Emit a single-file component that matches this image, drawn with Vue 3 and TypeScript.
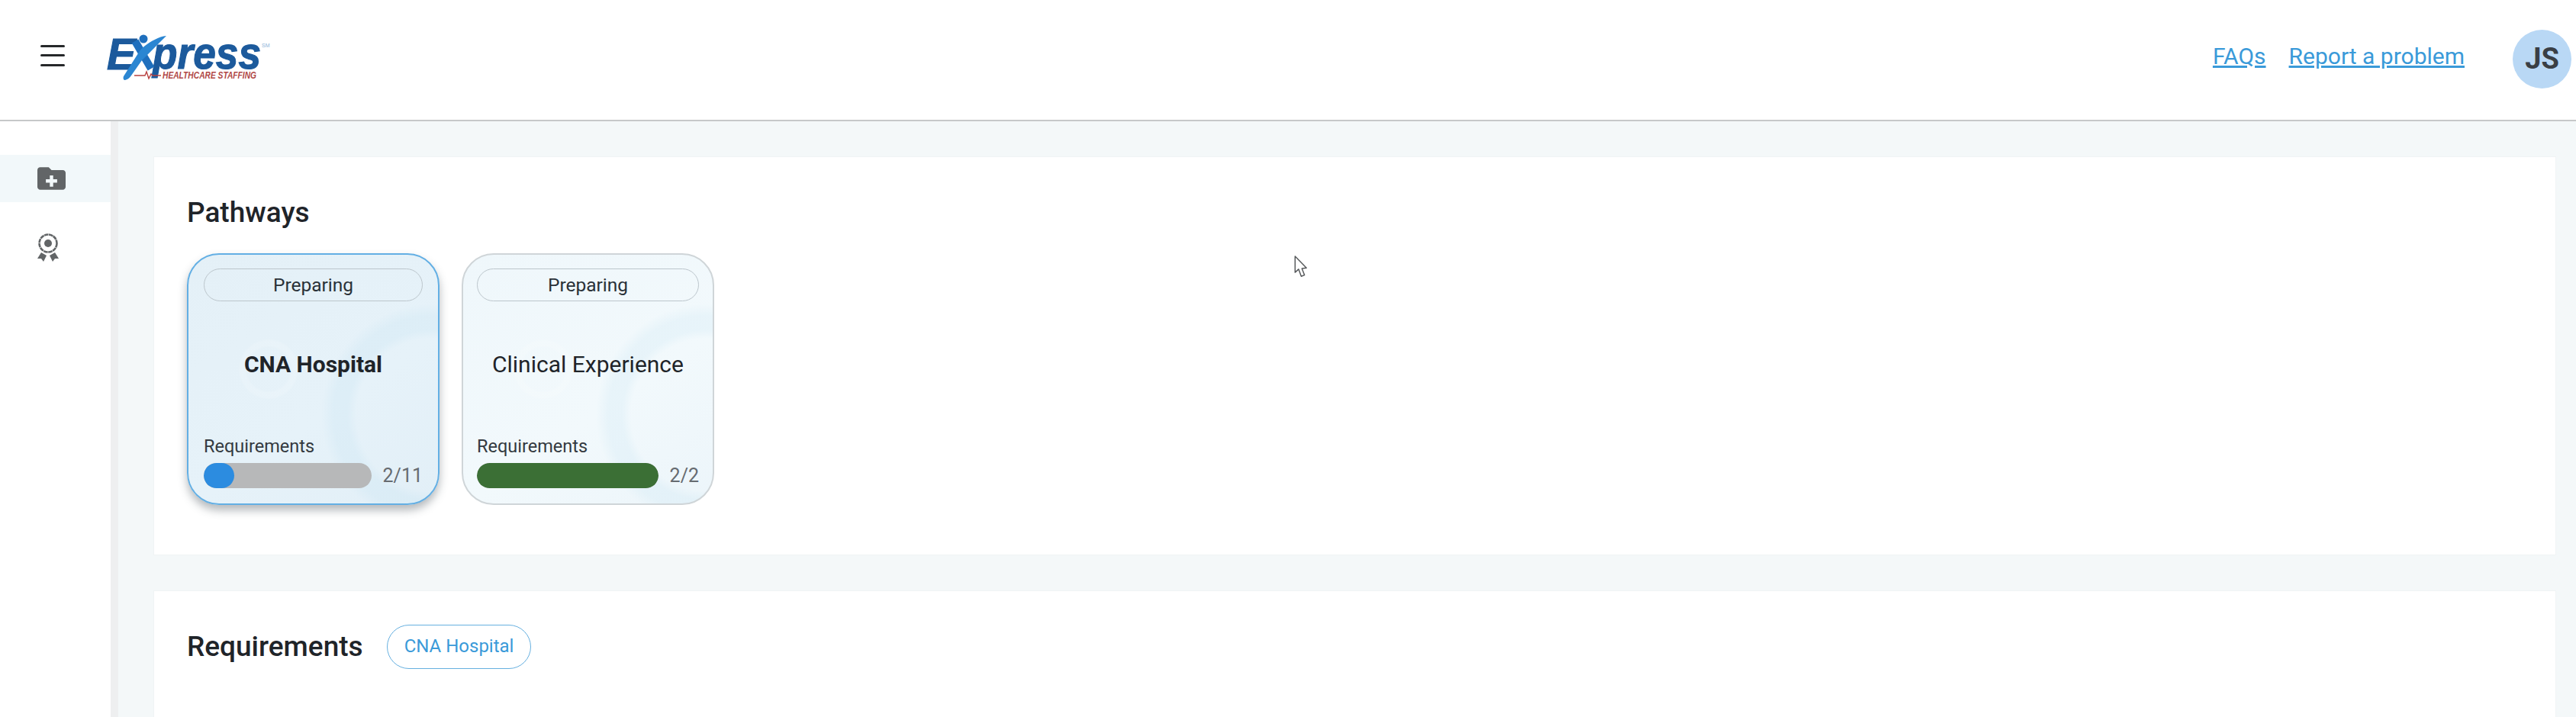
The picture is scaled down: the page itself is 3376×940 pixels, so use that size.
<script setup lang="ts">
interface Pathway {
  name: string;
  done: number;
  total: number;
  selected?: boolean;
}

const pathways: Pathway[] = [
  { name: 'CNA Hospital', done: 2, total: 11, selected: true },
  { name: 'Clinical Experience', done: 2, total: 2 }
];

function fillWidth(p: Pathway) {
  // the bar never gets thinner than its rounded cap
  return `${Math.max((p.done / p.total) * 100, 18)}%`;
}
</script>

<template>
  <div class="page">
    <header class="topbar">
      <div class="brand">
        <button class="menu-btn" aria-label="Menu">
          <span></span><span></span><span></span>
        </button>
        <svg class="logo" viewBox="0 0 212 60" width="212" height="60">
          <text class="logo-e" x="0" y="46" textLength="38" lengthAdjust="spacingAndGlyphs">E</text>
          <text class="logo-press" x="60" y="45" textLength="142" lengthAdjust="spacingAndGlyphs">press</text>
          <path d="M37 9 L58 45" stroke="#1f6fbd" stroke-width="10" fill="none" />
          <path
            d="M24 60 C28 59 30 57 32 54 L46 34 C56 24 68 12 78 2 C68 3 58 9 50 15 C46 18 43 21 41 25 L22 55 C21 58 22 60 24 60 Z"
            fill="#2b86d2"
          />
          <circle cx="48" cy="6" r="5.500" fill="#1f6fbd" />
          <text class="logo-sm" x="203" y="17">SM</text>
          <path d="M36 54 H50 L52 49 L55 58 L58 52 L60 54 H71" stroke="#b8403f" stroke-width="1.400" fill="none" />
          <text class="logo-tag" x="73" y="58" textLength="123" lengthAdjust="spacingAndGlyphs">HEALTHCARE STAFFING</text>
        </svg>
      </div>
      <nav class="toplinks">
        <a href="#">FAQs</a>
        <a href="#">Report a problem</a>
        <div class="avatar">JS</div>
      </nav>
    </header>

    <div class="body">
      <aside class="sidebar">
        <div class="side-item active">
          <svg viewBox="2 4 20 16" width="37" height="32">
            <path
              fill="#626567"
              fill-rule="evenodd"
              d="M20 6h-8l-2-2H4c-1.100 0-2 .9-2 2v12c0 1.100.9 2 2 2h16c1.100 0 2-.9 2-2V8c0-1.100-.9-2-2-2zM16 15h-2.800v2.800h-2.400V15H8v-2.400h2.800V9.800h2.400v2.800H16V15z"
            />
          </svg>
        </div>
        <div class="side-item">
          <svg class="medal" viewBox="0 0 30 38" width="30" height="38">
            <circle cx="15" cy="14" r="11.500" fill="none" stroke="#626567" stroke-width="2.600" stroke-dasharray="5.500 .6" />
            <circle cx="15" cy="14" r="5" fill="#626567" />
            <path d="M1 34 L6 26 L13 30 L9 38 L6 34 Z M29 34 L24 26 L17 30 L21 38 L24 34 Z" fill="#626567" />
          </svg>
        </div>
      </aside>
      <div class="rail"></div>

      <main class="content">
        <section class="panel pathways">
          <h2>Pathways</h2>
          <div class="cards">
            <article
              v-for="p in pathways"
              :key="p.name"
              class="card"
              :class="{ selected: p.selected }"
            >
              <div class="status">Preparing</div>
              <div class="card-name">{{ p.name }}</div>
              <div class="req-label">Requirements</div>
              <div class="req-row">
                <div class="bar">
                  <div
                    class="bar-fill"
                    :class="{ complete: p.done === p.total }"
                    :style="{ width: fillWidth(p) }"
                  ></div>
                </div>
                <span class="count">{{ p.done }}/{{ p.total }}</span>
              </div>
            </article>
          </div>
        </section>

        <section class="panel requirements">
          <div class="req-head">
            <h2>Requirements</h2>
            <span class="chip">CNA Hospital</span>
          </div>
        </section>
      </main>
    </div>

    <svg class="cursor" viewBox="0 0 20 34" width="17" height="29">
      <path
        d="M1.500 1 V26 L7 21 L11 32 L16 30 L12 20 L19 19 Z"
        fill="#fff"
        stroke="#55585a"
        stroke-width="1.700"
        stroke-linejoin="round"
      />
    </svg>
  </div>
</template>

<style>
html,
body {
  margin: 0;
  background: #fff;
}
</style>

<style scoped>
.page {
  position: relative;
  width: 3376px;
  height: 940px;
  overflow: hidden;
  display: flex;
  flex-direction: column;
  font-family: Roboto, 'Liberation Sans', sans-serif;
  color: #1f2429;
}

.topbar {
  height: 157px;
  flex: none;
  display: flex;
  align-items: center;
  justify-content: space-between;
  padding: 0 6px 0 53px;
  border-bottom: 2px solid #c6c8c9;
  background: #fff;
}

.brand {
  display: flex;
  align-items: center;
  gap: 55px;
}

.menu-btn {
  width: 32px;
  height: 28px;
  padding: 0;
  border: 0;
  background: none;
  display: flex;
  flex-direction: column;
  justify-content: space-between;
  margin-top: -12px;
}

.menu-btn span {
  height: 3px;
  border-radius: 2px;
  background: #26282a;
}

.logo {
  margin-top: -7px;
  overflow: visible;
}

.logo-e,
.logo-press {
  font-family: 'Liberation Sans', sans-serif;
  font-weight: 700;
  font-style: italic;
  fill: #1c5a9c;
  stroke: #1c5a9c;
  stroke-width: 1.200px;
}

.logo-e {
  font-size: 58px;
}

.logo-press {
  font-size: 60px;
}

.logo-sm {
  font-family: 'Liberation Sans', sans-serif;
  font-size: 7px;
  fill: #8db4d8;
}

.logo-tag {
  font-family: 'Liberation Sans', sans-serif;
  font-size: 12.500px;
  font-weight: 700;
  font-style: italic;
  fill: #b04745;
}

.toplinks {
  display: flex;
  align-items: center;
  margin-top: -3px;
}

.toplinks a {
  font-size: 30px;
  color: #3a9ad9;
  text-decoration: underline;
  margin-right: 30px;
  margin-top: -8px;
}

.toplinks a:nth-child(2) {
  margin-right: 63px;
}

.avatar {
  width: 77px;
  height: 77px;
  border-radius: 50%;
  background: #b9d8f5;
  color: #3a3f45;
  font-size: 38px;
  font-weight: 700;
  display: flex;
  align-items: center;
  justify-content: center;
}

.body {
  flex: 1;
  display: flex;
  min-height: 0;
}

.sidebar {
  width: 145px;
  flex: none;
  padding-top: 44px;
  background: #fff;
}

.side-item {
  height: 62px;
  display: flex;
  align-items: center;
  padding-left: 49px;
}

.side-item.active {
  background: #f2f8fa;
}

.side-item + .side-item {
  margin-top: 28px;
  padding-left: 48px;
}

.rail {
  width: 10px;
  flex: none;
  background: #eeeff0;
}

.content {
  flex: 1;
  min-width: 0;
  display: flex;
  flex-direction: column;
  gap: 46px;
  padding: 46px 26px 0 46px;
  background: #f4f8f9;
}

.panel {
  background: #fff;
  border: 1px solid #f0f4f5;
  box-sizing: border-box;
  padding: 0 43px;
}

.pathways {
  height: 523px;
  flex: none;
  padding-top: 51px;
}

h2 {
  margin: 0;
  font-size: 37px;
  line-height: 44px;
  font-weight: 500;
  color: #1f2429;
}

.cards {
  display: flex;
  gap: 29px;
  margin-top: 31px;
}

.card {
  position: relative;
  width: 331px;
  height: 330px;
  box-sizing: border-box;
  padding: 18px 18px 20px;
  border: 2px solid #cfd5d8;
  border-radius: 42px;
  display: flex;
  flex-direction: column;
  background:
    radial-gradient(circle at 320px 210px, transparent 100px, rgba(190, 224, 240, 0.2) 112px, rgba(190, 224, 240, 0.2) 130px, transparent 146px),
    radial-gradient(circle at 105px 150px, transparent 28px, rgba(255, 255, 255, 0.14) 31px, rgba(255, 255, 255, 0.14) 37px, transparent 40px),
    linear-gradient(145deg, #eff7fb, #f2f9fc 60%, #ecf5fa);
}

.card.selected {
  padding: 18px 20px 20px;
  border-color: #63afe4;
  background:
    radial-gradient(circle at 320px 210px, transparent 100px, rgba(190, 224, 240, 0.22) 112px, rgba(190, 224, 240, 0.22) 130px, transparent 146px),
    radial-gradient(circle at 105px 150px, transparent 28px, rgba(255, 255, 255, 0.14) 31px, rgba(255, 255, 255, 0.14) 37px, transparent 40px),
    linear-gradient(145deg, #e4f0f7, #e6f2f9 60%, #e2eff7);
  box-shadow: 0 7px 12px rgba(60, 70, 80, 0.38);
}

.status {
  height: 43px;
  box-sizing: border-box;
  border: 1px solid #bcc6cc;
  border-radius: 22px;
  font-size: 24.500px;
  line-height: 41px;
  text-align: center;
  color: #2a3138;
}

.card-name {
  flex: 1;
  display: flex;
  align-items: center;
  justify-content: center;
  font-size: 30px;
  white-space: nowrap;
  padding-bottom: 12px;
}

.card.selected .card-name {
  font-weight: 700;
}

.req-label {
  font-size: 23.500px;
  line-height: 26px;
  color: #343a40;
}

.req-row {
  display: flex;
  align-items: center;
  gap: 15px;
  margin-top: 9px;
}

.bar {
  flex: 1;
  height: 33px;
  border-radius: 17px;
  background: #b7b8b9;
  overflow: hidden;
}

.bar-fill {
  height: 100%;
  border-radius: 17px;
  background: #2c8ce0;
}

.bar-fill.complete {
  background: #3b6f35;
}

.count {
  font-size: 25px;
  color: #666b70;
}

.requirements {
  height: 400px;
  flex: none;
  padding-top: 44px;
}

.req-head {
  display: flex;
  align-items: center;
  gap: 31px;
}

.chip {
  height: 58px;
  box-sizing: border-box;
  padding: 0 22px;
  border: 1.500px solid #66b0e0;
  border-radius: 29px;
  font-size: 24px;
  line-height: 55px;
  color: #3a9ad9;
}

.cursor {
  position: absolute;
  left: 1696px;
  top: 335px;
}
</style>
